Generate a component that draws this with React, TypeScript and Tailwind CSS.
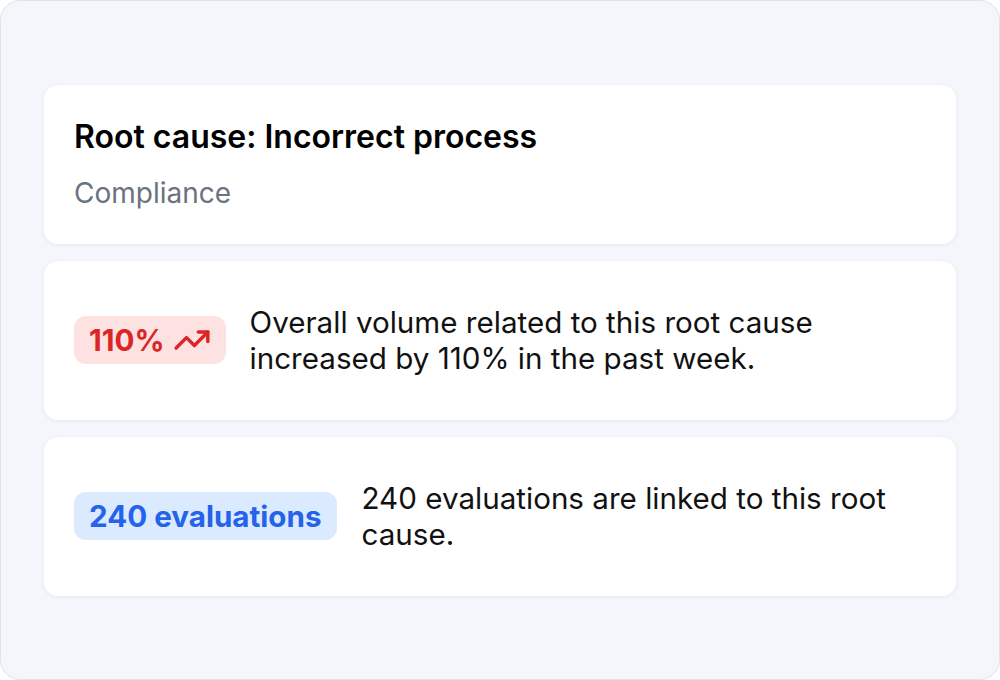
import React from 'react';
import { TrendingUp } from 'lucide-react';

function Card({ children, className = '' }: { children: React.ReactNode; className?: string }) {
  return (
    <div className={`bg-white rounded-[14px] shadow-[0_1px_4px_rgba(15,23,42,0.06)] ${className}`}>
      {children}
    </div>
  );
}

export default function App() {
  return (
    <div
      className="w-[1000px] h-[680px] bg-[#f3f6fa] border border-[#dfe3e9] rounded-[20px] flex flex-col justify-center gap-[17px] px-[43px]"
      style={{ fontFamily: 'Inter, "Noto Sans", sans-serif' }}
    >
      {/* Header card */}
      <Card className="h-[159px] px-[30px] pt-[34px]">
        <h1 className="text-[32px] leading-[36px] font-semibold text-black">
          Root cause: Incorrect process
        </h1>
        <p className="mt-[22px] text-[28px] leading-[32px] text-[#6b7280]">Compliance</p>
      </Card>

      {/* Volume card */}
      <Card className="h-[159px] px-[30px] flex items-center gap-[24px]">
        <div className="shrink-0 h-[48px] px-[15px] rounded-[12px] bg-[#fee2e2] flex items-center gap-[8px]">
          <span className="text-[29.6px] font-bold text-[#dc2626]">110%</span>
          <TrendingUp size={38} strokeWidth={2.2} className="text-[#dc2626]" />
        </div>
        <p className="text-[29.6px] leading-[36px] text-[#111]">
          Overall volume related to this root cause increased by 110% in the past week.
        </p>
      </Card>

      {/* Evaluations card */}
      <Card className="h-[159px] px-[30px] flex items-center gap-[25px]">
        <div className="shrink-0 h-[48px] px-[15px] rounded-[12px] bg-[#dbeafe] flex items-center">
          <span className="text-[29.6px] font-bold text-[#2563eb]">240 evaluations</span>
        </div>
        <p className="text-[29.6px] leading-[36px] text-[#111]">
          240 evaluations are linked to this root cause.
        </p>
      </Card>
    </div>
  );
}
